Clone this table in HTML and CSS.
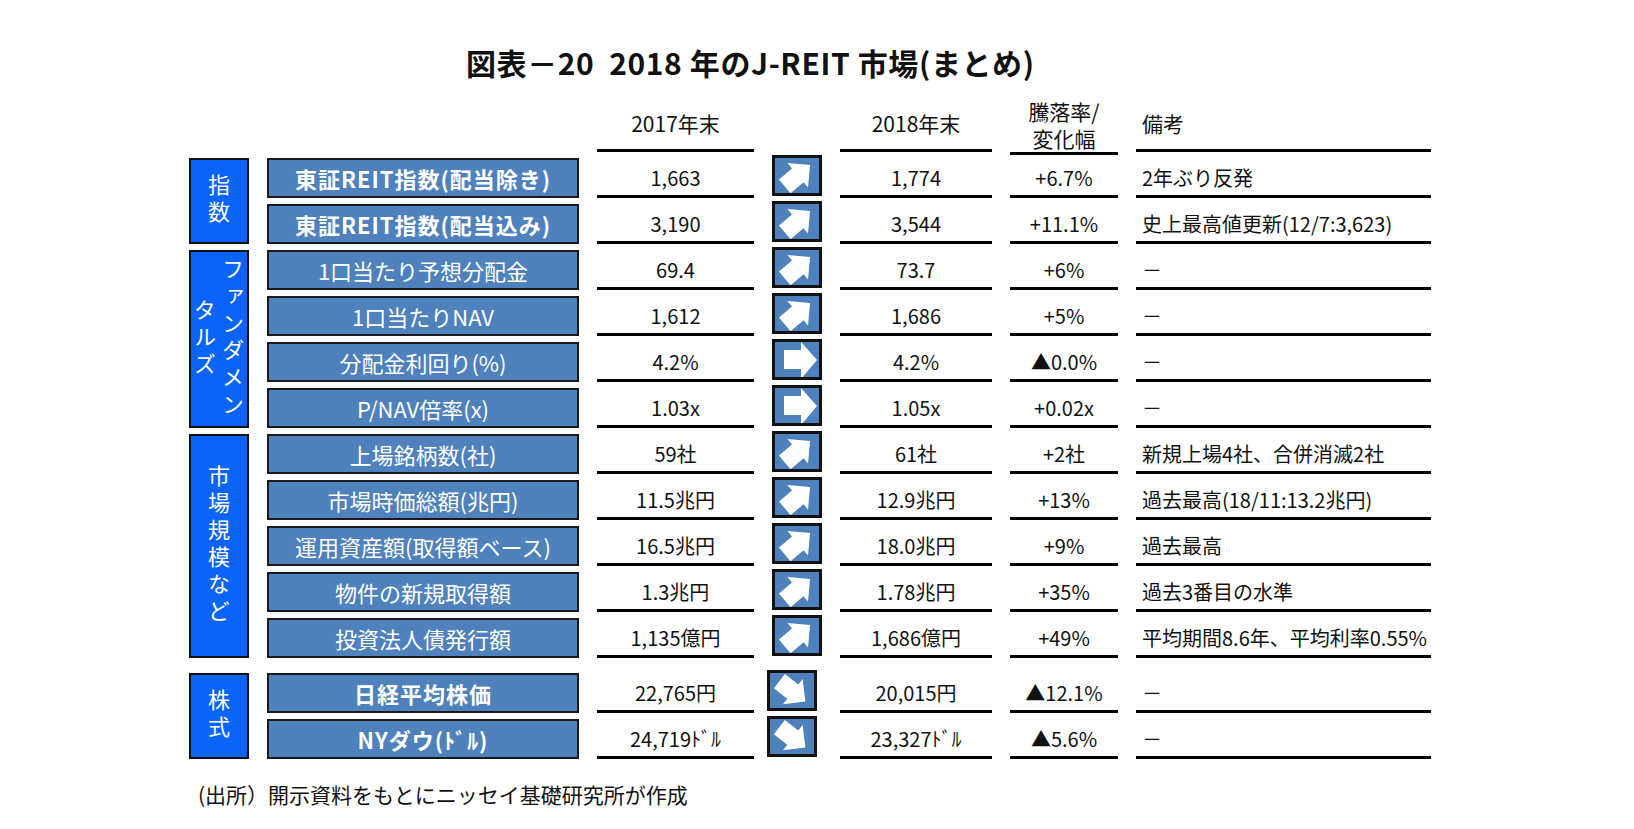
FILE: index.html
```html
<!DOCTYPE html>
<html lang="ja">
<head>
<meta charset="utf-8">
<title>図表－20 2018年のJ-REIT市場(まとめ)</title>
<link rel="stylesheet" href="styles.css">
</head>
<body>
<div class="page">
  <h1 class="title">図表－20  2018 年のJ-REIT 市場(まとめ)</h1>
  <div class="table">
    <div class="hd"></div>
    <div class="hd"></div>
    <div class="hd col">2017年末</div>
    <div class="hd"></div>
    <div class="hd col">2018年末</div>
    <div class="hd col two">騰落率/<br>変化幅</div>
    <div class="hd col note">備考</div>

    <div class="cat r2"><span>指数</span></div>
    <div class="lbl bold">東証REIT指数(配当除き)</div>
    <div class="val">1,663</div>
    <div class="arr"><svg viewBox="0 0 50 41" width="50" height="41"><rect x="1.5" y="1.5" width="47" height="38" fill="#4f81bd"/><path class="up" d="M9 12 H26 V5 L42 21 L26 37 V30 H9 Z" fill="#fff"/><rect x="1.5" y="1.5" width="47" height="38" fill="none" stroke="#111" stroke-width="3"/></svg></div>
    <div class="val">1,774</div>
    <div class="val">+6.7%</div>
    <div class="val note">2年ぶり反発</div>

    <div class="lbl bold">東証REIT指数(配当込み)</div>
    <div class="val">3,190</div>
    <div class="arr"><svg viewBox="0 0 50 41" width="50" height="41"><rect x="1.5" y="1.5" width="47" height="38" fill="#4f81bd"/><path class="up" d="M9 12 H26 V5 L42 21 L26 37 V30 H9 Z" fill="#fff"/><rect x="1.5" y="1.5" width="47" height="38" fill="none" stroke="#111" stroke-width="3"/></svg></div>
    <div class="val">3,544</div>
    <div class="val">+11.1%</div>
    <div class="val note">史上最高値更新(12/7:3,623)</div>

    <div class="cat r4"><span>ファンダメン<br>タルズ</span></div>
    <div class="lbl">1口当たり予想分配金</div>
    <div class="val">69.4</div>
    <div class="arr"><svg viewBox="0 0 50 41" width="50" height="41"><rect x="1.5" y="1.5" width="47" height="38" fill="#4f81bd"/><path class="up" d="M9 12 H26 V5 L42 21 L26 37 V30 H9 Z" fill="#fff"/><rect x="1.5" y="1.5" width="47" height="38" fill="none" stroke="#111" stroke-width="3"/></svg></div>
    <div class="val">73.7</div>
    <div class="val">+6%</div>
    <div class="val note">－</div>

    <div class="lbl">1口当たりNAV</div>
    <div class="val">1,612</div>
    <div class="arr"><svg viewBox="0 0 50 41" width="50" height="41"><rect x="1.5" y="1.5" width="47" height="38" fill="#4f81bd"/><path class="up" d="M9 12 H26 V5 L42 21 L26 37 V30 H9 Z" fill="#fff"/><rect x="1.5" y="1.5" width="47" height="38" fill="none" stroke="#111" stroke-width="3"/></svg></div>
    <div class="val">1,686</div>
    <div class="val">+5%</div>
    <div class="val note">－</div>

    <div class="lbl">分配金利回り(%)</div>
    <div class="val">4.2%</div>
    <div class="arr"><svg viewBox="0 0 50 41" width="50" height="41"><rect x="1.5" y="1.5" width="47" height="38" fill="#4f81bd"/><path d="M12 11 H29 V3 L45 21 L29 40 V30 H12 Z" fill="#fff"/><rect x="1.5" y="1.5" width="47" height="38" fill="none" stroke="#111" stroke-width="3"/></svg></div>
    <div class="val">4.2%</div>
    <div class="val">▲0.0%</div>
    <div class="val note">－</div>

    <div class="lbl">P/NAV倍率(x)</div>
    <div class="val">1.03x</div>
    <div class="arr"><svg viewBox="0 0 50 41" width="50" height="41"><rect x="1.5" y="1.5" width="47" height="38" fill="#4f81bd"/><path d="M12 11 H29 V3 L45 21 L29 40 V30 H12 Z" fill="#fff"/><rect x="1.5" y="1.5" width="47" height="38" fill="none" stroke="#111" stroke-width="3"/></svg></div>
    <div class="val">1.05x</div>
    <div class="val">+0.02x</div>
    <div class="val note">－</div>

    <div class="cat r5"><span>市場規模など</span></div>
    <div class="lbl">上場銘柄数(社)</div>
    <div class="val">59社</div>
    <div class="arr"><svg viewBox="0 0 50 41" width="50" height="41"><rect x="1.5" y="1.5" width="47" height="38" fill="#4f81bd"/><path class="up" d="M9 12 H26 V5 L42 21 L26 37 V30 H9 Z" fill="#fff"/><rect x="1.5" y="1.5" width="47" height="38" fill="none" stroke="#111" stroke-width="3"/></svg></div>
    <div class="val">61社</div>
    <div class="val">+2社</div>
    <div class="val note">新規上場4社、合併消滅2社</div>

    <div class="lbl">市場時価総額(兆円)</div>
    <div class="val">11.5兆円</div>
    <div class="arr"><svg viewBox="0 0 50 41" width="50" height="41"><rect x="1.5" y="1.5" width="47" height="38" fill="#4f81bd"/><path class="up" d="M9 12 H26 V5 L42 21 L26 37 V30 H9 Z" fill="#fff"/><rect x="1.5" y="1.5" width="47" height="38" fill="none" stroke="#111" stroke-width="3"/></svg></div>
    <div class="val">12.9兆円</div>
    <div class="val">+13%</div>
    <div class="val note">過去最高(18/11:13.2兆円)</div>

    <div class="lbl">運用資産額(取得額ベース)</div>
    <div class="val">16.5兆円</div>
    <div class="arr"><svg viewBox="0 0 50 41" width="50" height="41"><rect x="1.5" y="1.5" width="47" height="38" fill="#4f81bd"/><path class="up" d="M9 12 H26 V5 L42 21 L26 37 V30 H9 Z" fill="#fff"/><rect x="1.5" y="1.5" width="47" height="38" fill="none" stroke="#111" stroke-width="3"/></svg></div>
    <div class="val">18.0兆円</div>
    <div class="val">+9%</div>
    <div class="val note">過去最高</div>

    <div class="lbl">物件の新規取得額</div>
    <div class="val">1.3兆円</div>
    <div class="arr"><svg viewBox="0 0 50 41" width="50" height="41"><rect x="1.5" y="1.5" width="47" height="38" fill="#4f81bd"/><path class="up" d="M9 12 H26 V5 L42 21 L26 37 V30 H9 Z" fill="#fff"/><rect x="1.5" y="1.5" width="47" height="38" fill="none" stroke="#111" stroke-width="3"/></svg></div>
    <div class="val">1.78兆円</div>
    <div class="val">+35%</div>
    <div class="val note">過去3番目の水準</div>

    <div class="lbl">投資法人債発行額</div>
    <div class="val">1,135億円</div>
    <div class="arr"><svg viewBox="0 0 50 41" width="50" height="41"><rect x="1.5" y="1.5" width="47" height="38" fill="#4f81bd"/><path class="up" d="M9 12 H26 V5 L42 21 L26 37 V30 H9 Z" fill="#fff"/><rect x="1.5" y="1.5" width="47" height="38" fill="none" stroke="#111" stroke-width="3"/></svg></div>
    <div class="val">1,686億円</div>
    <div class="val">+49%</div>
    <div class="val note">平均期間8.6年、平均利率0.55%</div>

    <div class="spacer"></div>

    <div class="cat r2"><span>株式</span></div>
    <div class="lbl bold">日経平均株価</div>
    <div class="val">22,765円</div>
    <div class="arr shift"><svg viewBox="0 0 50 41" width="50" height="41"><rect x="1.5" y="1.5" width="47" height="38" fill="#4f81bd"/><path class="down" d="M9 12 H26 V5 L42 21 L26 37 V30 H9 Z" fill="#fff"/><rect x="1.5" y="1.5" width="47" height="38" fill="none" stroke="#111" stroke-width="3"/></svg></div>
    <div class="val">20,015円</div>
    <div class="val">▲12.1%</div>
    <div class="val note">－</div>

    <div class="lbl bold">NYダウ(ﾄﾞﾙ)</div>
    <div class="val">24,719ﾄﾞﾙ</div>
    <div class="arr shift"><svg viewBox="0 0 50 41" width="50" height="41"><rect x="1.5" y="1.5" width="47" height="38" fill="#4f81bd"/><path class="down" d="M9 12 H26 V5 L42 21 L26 37 V30 H9 Z" fill="#fff"/><rect x="1.5" y="1.5" width="47" height="38" fill="none" stroke="#111" stroke-width="3"/></svg></div>
    <div class="val">23,327ﾄﾞﾙ</div>
    <div class="val">▲5.6%</div>
    <div class="val note">－</div>
  </div>
  <p class="source">(出所）開示資料をもとにニッセイ基礎研究所が作成</p>
</div>
</body>
</html>
```

FILE: styles.css
```css
html, body {
  margin: 0;
  padding: 0;
  background: #fff;
}

body {
  font-family: "Noto Sans CJK JP", "Noto Sans", sans-serif;
  color: #111;
}

.page {
  width: 1634px;
  height: 829px;
  box-sizing: border-box;
  padding: 45px 0 0 189px;
}

.title {
  margin: 0 0 0 277px;
  font-size: 30px;
  line-height: 35px;
  font-weight: 700;
  white-space: pre;
  letter-spacing: 0.6px;
}

.table {
  margin-top: 18px;
  display: grid;
  grid-template-columns: 60px 312px 157px 50px 152px 108px 295px;
  column-gap: 18px;
  row-gap: 6px;
  width: 1242px;
}

.hd {
  height: 54px;
}

.hd.col {
  box-sizing: border-box;
  height: 55px;
  border-bottom: 3px solid #000;
  display: flex;
  align-items: center;
  justify-content: center;
  text-align: center;
  font-size: 21px;
  line-height: 27px;
  margin-top: -1px;
}

.hd.two {
  align-items: flex-end;
  line-height: 27px;
  margin-bottom: -3px;
  height: 58px;
}

.hd.note {
  justify-content: flex-start;
  padding-left: 6px;
}

.cat {
  background: #0a64fa;
  border: 2px solid #111;
  box-sizing: border-box;
  color: #fff;
  display: flex;
  align-items: center;
  justify-content: center;
}

.cat.r2 { grid-row: span 2; }
.cat.r4 { grid-row: span 4; }
.cat.r5 { grid-row: span 5; }

.cat span {
  writing-mode: vertical-rl;
  text-orientation: upright;
  font-size: 22px;
  line-height: 28px;
  letter-spacing: 5px;
  text-align: center;
}

.lbl {
  height: 40px;
  box-sizing: border-box;
  background: #4f81bd;
  border: 2px solid #1a1a1a;
  color: #fff;
  display: flex;
  align-items: center;
  justify-content: center;
  font-size: 22px;
  white-space: nowrap;
}

.lbl.bold {
  font-weight: 700;
  letter-spacing: 1px;
}

.val {
  height: 40px;
  box-sizing: border-box;
  border-bottom: 3px solid #000;
  display: flex;
  align-items: center;
  justify-content: center;
  font-size: 20px;
  padding-top: 2px;
  white-space: nowrap;
}

.val.note {
  justify-content: flex-start;
  padding-left: 6px;
}

.arr {
  height: 40px;
  display: flex;
  align-items: flex-start;
  margin-top: -3px;
}

.arr svg {
  display: block;
}

.arr.shift {
  margin-left: -5px;
}

.up {
  transform: rotate(-40deg);
  transform-origin: 25px 21px;
}

.down {
  transform: rotate(38deg);
  transform-origin: 25px 21px;
}

.spacer {
  grid-column: 1 / -1;
  height: 3px;
}

.source {
  margin: 21px 0 0 9px;
  font-size: 21px;
  line-height: 28px;
}
```
